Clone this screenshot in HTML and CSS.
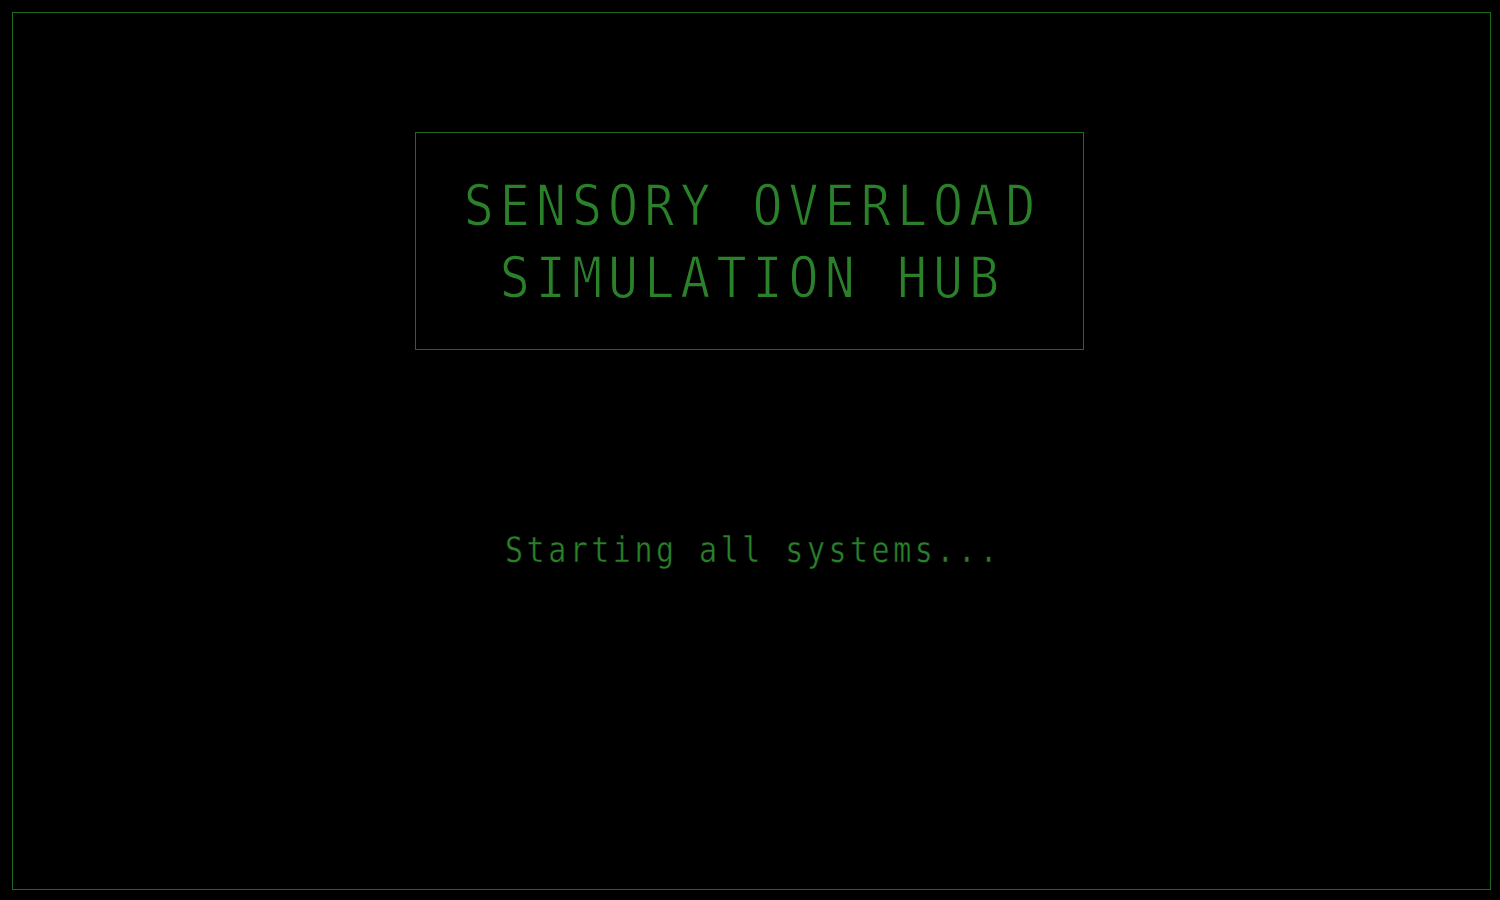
FILE: index.html
```html
<!DOCTYPE html>
<html>
<head>
<meta charset="utf-8">
<link rel="stylesheet" href="styles.css">
</head>
<body>
<div class="screen">
  <div class="title-box">
    <h1 class="title">SENSORY OVERLOAD<br>SIMULATION HUB</h1>
  </div>
  <p class="status">Starting all systems...</p>
</div>
</body>
</html>
```
FILE: styles.css
```css
html, body {
  margin: 0;
  padding: 0;
  background: #000;
}
body {
  width: 1500px;
  height: 900px;
  overflow: hidden;
  font-family: "DejaVu Sans Mono", monospace;
  color: #2a7f2a;
}
.screen {
  box-sizing: border-box;
  margin: 12px 0 0 12px;
  width: 1479px;
  height: 878px;
  border: 1px solid #1f6a1f;
  display: flex;
  flex-direction: column;
  align-items: center;
  padding-top: 119px;
}
.title-box {
  box-sizing: border-box;
  width: 669px;
  height: 218px;
  margin-right: 4px;
  border: 1px solid #1f6a1f;
  display: flex;
  align-items: center;
  justify-content: center;
}
.title {
  margin: 4px 0 0;
  padding-left: 6px;
  font-weight: normal;
  font-size: 50px;
  letter-spacing: 6px;
  line-height: 63px;
  text-align: center;
  color: #2a812a;
  -webkit-text-stroke: 1.1px #000;
  transform: scaleY(1.14);
}
.status {
  margin: 182px 0 0;
  padding-left: 3px;
  font-size: 30px;
  letter-spacing: 3.5px;
  line-height: 36px;
  color: #2a812a;
  -webkit-text-stroke: 0.4px #000;
  transform: scaleY(1.19);
}
```
